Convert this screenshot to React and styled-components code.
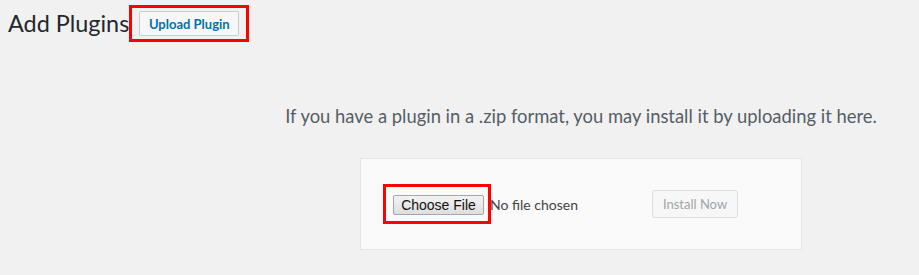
import React from 'react'
import styled, { createGlobalStyle } from 'styled-components'

const GlobalStyle = createGlobalStyle`
  html, body {
    margin: 0;
    padding: 0;
    background: #f1f1f1;
    overflow: hidden;
  }
  body {
    font-family: Lato, "Open Sans", sans-serif;
    color: #444;
  }
`;

const Page = styled.div`
  width: 919px;
  height: 275px;
  box-sizing: border-box;
`;

const Header = styled.div`
  display: flex;
  align-items: center;
  padding: 5px 0 0 8px;
`;

const Title = styled.h1`
  margin: 0;
  font-size: 23.4px;
  font-weight: 400;
  line-height: 29px;
  color: #23282d;
`;

const Highlight = styled.div`
  display: flex;
  border: 3px solid #ff0000;
  padding: ${(p) => p.$pad};
  margin-left: ${(p) => p.$left || 0}px;
`;

const TitleAction = styled.button`
  box-sizing: border-box;
  width: 100px;
  height: 25px;
  padding: 0;
  border: 1px solid #ccc;
  border-radius: 2px;
  background: #f7f7f7;
  color: #0073aa;
  font-family: Lato, "Open Sans", sans-serif;
  font-size: 13px;
  font-weight: 700;
`;

const Upload = styled.section`
  margin-left: 243px;
  width: 676px;
  display: flex;
  flex-direction: column;
  align-items: center;
`;

const Help = styled.p`
  margin: 62px 0 0;
  font-size: 18.4px;
  line-height: 24px;
  color: #555d66;
  text-align: center;
  white-space: nowrap;
`;

const Form = styled.div`
  box-sizing: border-box;
  width: 442px;
  height: 92px;
  margin-top: 30px;
  background: #fafafa;
  border: 1px solid #e5e5e5;
  padding: 0 0 0 22px;
  display: flex;
  align-items: center;
`;

const FileButton = styled.button`
  box-sizing: border-box;
  width: 91px;
  height: 20px;
  padding: 0;
  border: 1px solid #a6a6a6;
  border-radius: 2px;
  background: linear-gradient(#f4f4f4, #dedede);
  color: #111;
  font-family: "Liberation Sans", Arial, sans-serif;
  font-size: 14px;
  line-height: 18px;
`;

const FileName = styled.span`
  flex: 0 0 162px;
  margin-left: -1px;
  font-size: 14px;
  color: #444;
`;

const InstallButton = styled.button`
  box-sizing: border-box;
  width: 86px;
  height: 28px;
  padding: 0;
  border: 1px solid #ddd;
  border-radius: 3px;
  background: #f7f7f7;
  color: #a0a5aa;
  font-family: Lato, "Open Sans", sans-serif;
  font-size: 13px;
`;

export default function App() {
  return (
    <Page>
      <GlobalStyle />
      <Header>
        <Title>Add Plugins</Title>
        <Highlight $pad="3px 7px" $left={0}>
          <TitleAction>Upload Plugin</TitleAction>
        </Highlight>
      </Header>
      <Upload>
        <Help>If you have a plugin in a .zip format, you may install it by uploading it here.</Help>
        <Form>
          <Highlight $pad="8px 4px 6px 7px">
            <FileButton>Choose File</FileButton>
          </Highlight>
          <FileName>No file chosen</FileName>
          <InstallButton disabled>Install Now</InstallButton>
        </Form>
      </Upload>
    </Page>
  );
}
